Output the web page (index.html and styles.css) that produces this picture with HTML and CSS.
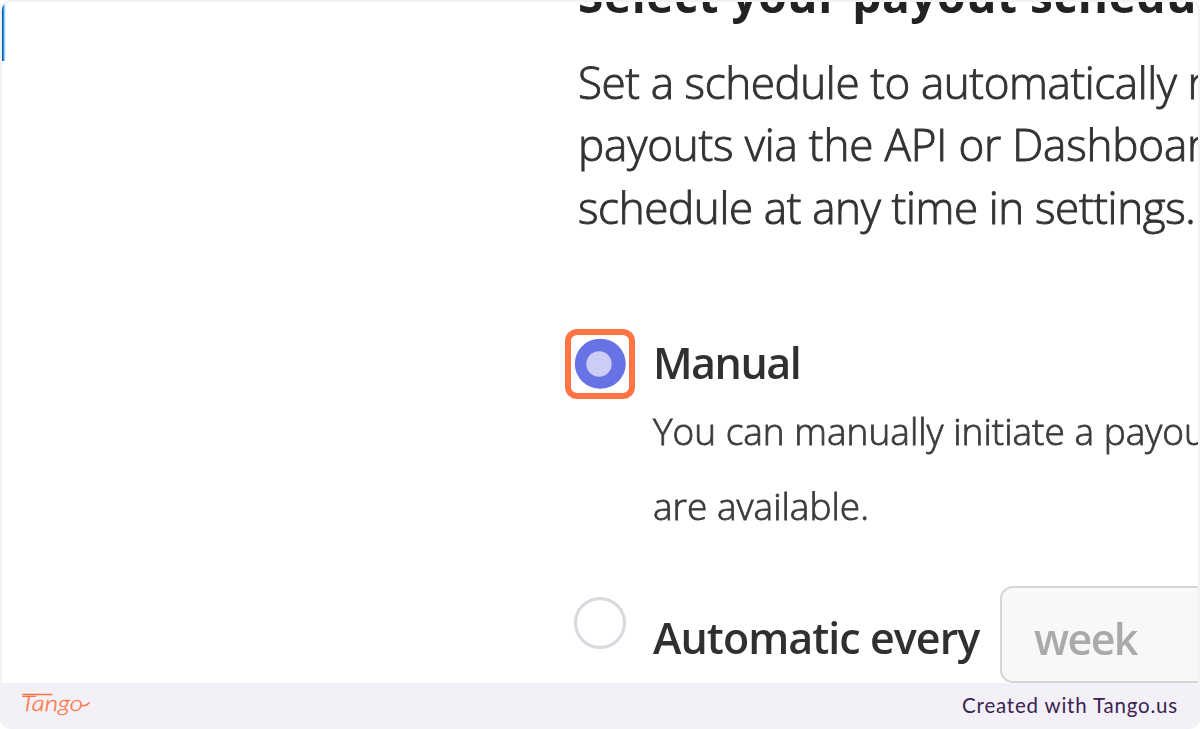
FILE: index.html
```html
<!DOCTYPE html>
<html lang="en">
<head>
<meta charset="utf-8">
<title>Payout schedule</title>
<link rel="stylesheet" href="styles.css">
</head>
<body>
<div class="frame">
  <main class="shot">
    <div class="edge"></div>
    <section class="content">
      <h1 class="title">Select your payout schedu</h1>
      <p class="intro">Set a schedule to automatically r<br><span class="second">payouts via the API or Dashboar</span><br><span class="third">schedule at any time in settings.</span></p>
      <div class="option manual">
        <div class="target"><svg width="58" height="58" viewBox="0 0 58 58"><ellipse cx="29.3" cy="28.7" rx="25.5" ry="25" fill="#6772e5"/><circle cx="28" cy="29" r="12.7" fill="#cbcdf7"/></svg></div>
        <div class="body">
          <div class="label">Manual</div>
          <p class="hint">You can manually initiate a payou<br>are available.</p>
        </div>
      </div>
      <div class="option auto">
        <span class="radio"></span>
        <div class="label">Automatic every</div>
        <div class="select">week</div>
      </div>
    </section>
  </main>
  <footer class="bar">
    <svg class="logo" width="72" height="38" viewBox="0 0 72 38"><text x="0" y="22.5" class="word" textLength="62" lengthAdjust="spacingAndGlyphs">Tango</text><path d="M2 6.5H31M61 17.5Q65 18.5 68 15" fill="none" stroke="#ff7442" stroke-width="1.5" stroke-linecap="round"/></svg>
    <span class="credit">Created with Tango.us</span>
  </footer>
</div>
</body>
</html>
```
FILE: styles.css
```css
* { box-sizing: border-box; }
body { margin: 0; background: #fff; overflow: hidden; font-family: "Open Sans", "Noto Sans", sans-serif; }
.frame { width: 1200px; height: 729px; padding: 2px 2px 0; background: #f3f1f7; border-radius: 10px; overflow: hidden; }
.shot { display: flex; height: 681px; background: #fff; border-radius: 8px 8px 0 0; overflow: hidden; }
.edge { flex: none; width: 4px; height: 59px; background: linear-gradient(90deg, #005fae 0 1px, #2b8ee0 1px 2px, #9bd3fb 2px 3px, #e6f5fe 3px); }
.content { flex: none; width: 900px; margin-left: 559px; padding-left: 13px; color: #4a4a4a; white-space: nowrap; }
.title, .intro, .hint { margin: 0; filter: blur(.7px); }
.title { margin-top: -38px; font-size: 46px; line-height: 62px; font-weight: 700; color: #222; letter-spacing: .6px; }
.intro { margin-top: 24.5px; font-size: 44px; line-height: 62.5px; font-weight: 300; color: #333; letter-spacing: -.41px; -webkit-text-stroke: .9px #333; }
.second { letter-spacing: -.18px; }
.third { letter-spacing: -.38px; }
.option { display: flex; }
.manual { margin: 90.5px 0 0 -13px; }
.target { flex: none; width: 70px; height: 70px; border: 6px solid #ff7442; border-radius: 12px; background: #fff; }
.target svg { display: block; filter: blur(.7px); }
.body { margin-left: 18px; padding-top: 3px; }
.label { font-size: 43px; line-height: 62px; font-weight: 600; color: #303030; letter-spacing: -1.5px; filter: blur(.7px); }
.hint { margin-top: -1px; font-size: 37px; line-height: 75px; font-weight: 300; color: #3c3c3c; letter-spacing: 0; -webkit-text-stroke: .8px #3c3c3c; }
.auto { align-items: flex-start; margin: 40px 0 0 -4px; }
.radio { flex: none; width: 52px; height: 52px; margin-top: 14px; border: 3px solid #d8d8de; border-radius: 50%; filter: blur(.7px); }
.auto .label { flex: none; width: 374px; padding-left: 27px; margin-top: 24px; letter-spacing: -.95px; }
.select { flex: none; width: 400px; height: 97px; padding: 20px 32px; margin-top: 3.5px; border: 2px solid #d5d5d5; border-radius: 13px; background: #f8f8f8; color: #aaa; font-size: 43px; line-height: 62px; font-weight: 600; letter-spacing: -1.6px; filter: blur(.7px); }
.bar { display: flex; justify-content: space-between; height: 46px; padding: 5px 20px 0 19px; }
.logo { display: block; }
.word { font: italic 300 22.5px Lato, sans-serif; fill: #ff7442; stroke: #ff7442; stroke-width: .3px; }
.credit { font: 400 20.5px/34px Lato, sans-serif; color: #3a2352; letter-spacing: .8px; }
```
